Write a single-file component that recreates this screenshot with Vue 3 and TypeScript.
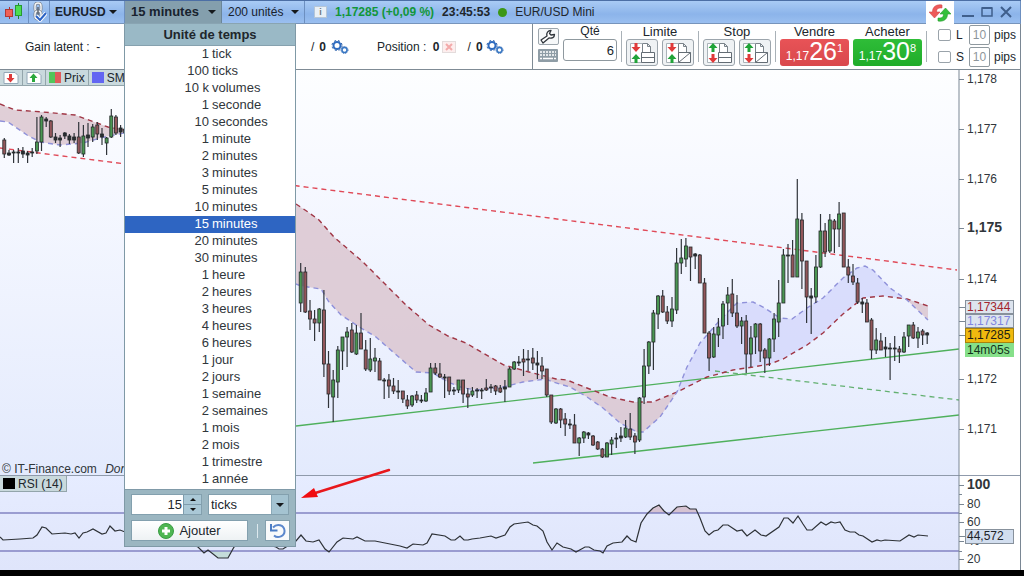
<script setup lang="ts">
import { ref } from 'vue'

interface Candle { x: number; high: number; top: number; bottom: number; low: number; fill: string }

const fills: Record<string, string> = { g: '#4a9652', r: '#92565a', k: '#2a2e33' }

// Each entry: high, body top, body bottom, low, colour key
function readCandles(source: string, start: number, step: number): Candle[] {
  return source.trim().split(/\s+/).map((item, i) => {
    const p = item.split(',')
    return { x: Math.round((start + i * step) * 10) / 10, high: +p[0], top: +p[1], bottom: +p[2], low: +p[3], fill: fills[p[4] ?? 'k'] }
  })
}

const morning = readCandles(`
138,140,154,158,r 150,153,155,156 150,152,153,163 148,152,153,163 147,151,154,158 151,153,155,163 148,152,153,157
117,142,151,154,g 115,117,142,151,g 117,119,121,127 120,121,137,138,r 133,137,140,143 135,138,140,147 132,133,136,139
134,136,140,144 133,137,140,143 122,137,153,154,r 125,136,154,157,g 123,135,138,147 124,127,137,142,g 122,125,134,140,r
128,134,137,145 137,138,143,155,g 109,116,137,138,g 115,117,133,135,r 125,128,132,137 123,129,133,137`, 4.3, 4.65)

const session = readCandles(`
263,272,303,312,g 267,272,312,313,r 300,311,319,330,r 310,319,323,341,r 308,309,323,332,g 290,310,364,377,r 351,364,394,408,r
370,380,397,422,g 346,350,382,398,g 337,337,351,370,g 327,332,337,367,g 323,330,352,353,r 325,333,354,355,g 313,333,349,349,r
340,350,369,371,r 338,359,370,372,g 348,358,361,372,g 358,361,380,380,r 378,380,381,399 374,380,386,398,r 378,386,391,394,r
380,391,392,399 391,391,399,403,r 395,400,406,409,r 395,396,405,407,g 391,395,400,403,r 395,400,401,403 388,393,401,402,g
363,368,392,392,g 363,368,373,375,r 363,374,377,378,r 374,377,378,398 377,377,391,395,r 387,390,391,395 380,380,390,393,g
380,380,394,403,r 388,394,397,408,r 387,391,395,397,g 388,390,391,398 388,390,391,399 379,388,390,391,r 384,387,388,393
385,386,391,395,r 385,388,392,393,r 380,387,389,402 367,369,387,387,g 361,362,369,370,g 356,362,363,366 349,359,362,376,r
350,359,360,371 348,358,363,370,r 351,363,365,379 357,366,371,379,r 369,369,395,397,r 395,395,422,424,r 408,409,423,424,g
408,409,420,428,r 413,419,424,436,r 419,424,425,429 414,425,443,443,r 437,438,443,456,g 431,432,438,443,g 432,433,435,439
435,436,445,446,r 441,442,449,450,r 448,449,457,458,r 442,443,457,457,g 437,440,444,455,g 433,438,439,448 427,436,438,442
420,428,437,438,g 413,429,437,440,r 433,436,442,454,r 397,398,440,442,g 349,366,397,404,g 341,342,366,374,g 310,313,342,370,g
295,296,314,329,g 290,296,312,313,r 306,312,321,324,r 297,309,321,327,g 248,263,310,314,g 239,258,263,274,g 238,246,259,267,g
247,247,257,281,r 253,254,256,269 254,255,283,283,r 278,283,333,333,r 331,333,358,371,r 327,334,357,358,g 318,327,335,347,g
301,304,326,339,g 287,295,303,325,g 279,294,313,317,r 295,313,326,328,r 317,321,326,344,g 315,321,354,373,r 326,338,354,367,g
323,324,337,354,g 323,324,351,362,r 348,350,358,373,r 338,339,358,366,g 313,319,339,352,g 280,303,322,337,g 249,255,303,303,g
244,255,256,283 240,255,277,277,r 179,219,277,277,g 213,220,261,289,r 261,261,297,323,r 288,296,298,334 255,267,297,303,g
214,231,267,268,g 223,231,252,257,r 214,220,251,253,g 219,221,229,253,r 202,214,229,247,g 213,213,267,267,r 259,267,275,283,r
264,276,282,285,r 278,283,302,304,r 298,302,304,313 299,303,322,322,r 318,320,350,359,r 328,340,350,354,g 333,341,350,350,r
337,347,349,357 343,348,349,380 336,348,349,361 346,349,352,363,r 332,337,352,353,g 325,325,336,347,g 322,325,338,339,r
327,332,338,348,g 329,331,335,345,r 332,333,335,344`, 300.7, 4.641)

const candles: Candle[] = [...morning, ...session]

const slow = '296,204 308,212 319,220 334,237 363,262 384,283 406,305 429,325 448,336 466,343 483,353 504,365 529,372 556,379 567,380 587,388 610,397 633,402 653,402 677,392 707,377 733,370 753,367 770,364 783,359 807,345 823,333 843,314 863,298 883,296 907,299 928,306'
const fast = '296,284 301,286 321,289 329,302 341,315 361,328 376,337 393,352 416,372 433,373 448,382 463,388 478,390 503,387 523,382 546,379 553,382 570,387 587,397 603,408 620,423 637,432 643,432 660,417 677,392 687,367 700,343 720,320 737,303 753,302 763,307 780,318 792,319 807,308 823,298 843,278 857,268 865,266 873,270 890,288 907,300 928,320'
const slowLeft = '0,104 15,110 43,112 75,115 97,123 108,127 124,130'
const fastLeft = '0,121 8,122 27,135 40,142 60,145 83,143 100,138 124,133'

function reversed(points: string): string {
  return points.split(' ').reverse().join(' ')
}
function between(points: string, from: number, to: number): string {
  return points.split(' ').filter((p) => { const x = +p.split(',')[0]; return x >= from && x <= to }).join(' ')
}
function band(from: number, to: number): string {
  return between(slow, from, to) + ' ' + reversed(between(fast, from, to))
}
const leftBand = slowLeft + ' ' + reversed(fastLeft)

const rsi = '0,537 3,540 20,539 33,538 37,535 42,527 46,528 52,534 65,533 71,534 75,533 79,538 83,533 87,532 93,529 102,534 106,533 110,526 115,531 120,530 125,532 150,534 180,540 198,547 204,553 208,550 218,558 228,558 234,547 250,540 276,547 279,549 283,549 286,547 296,541 301,535 306,541 313,542 319,540 325,549 329,552 337,542 343,538 353,539 357,537 365,541 375,541 390,544 400,546 407,548 413,544 423,545 427,543 432,534 445,536 451,540 455,540 460,536 464,540 468,540 472,539 480,538 491,536 496,538 505,535 510,527 514,524 521,523 528,522 533,525 537,526 543,531 547,542 552,550 557,543 563,547 571,549 576,552 585,547 589,547 594,550 600,551 603,553 607,546 613,543 622,542 627,536 631,540 636,542 641,523 647,514 653,508 659,505 664,511 669,515 677,507 686,506 690,509 696,509 700,518 705,531 709,535 714,531 718,530 723,525 728,525 737,531 742,530 747,536 755,530 761,535 766,536 779,527 784,518 788,518 793,523 798,516 803,524 807,530 812,530 821,522 826,525 831,522 835,523 840,522 845,530 850,532 855,532 859,535 863,536 872,542 877,540 881,541 885,540 900,541 909,535 914,537 918,535 928,536'

const prices = [
  { text: '1,178', y: 79 }, { text: '1,177', y: 129 }, { text: '1,176', y: 179 }, { text: '1,175', y: 228, strong: true },
  { text: '1,174', y: 279 }, { text: '1,172', y: 379 }, { text: '1,171', y: 429 },
]
const levels = [
  { text: '100', y: 485, strong: true }, { text: '80', y: 504 }, { text: '60', y: 522 }, { text: '40', y: 541 }, { text: '20', y: 559 },
]
const tags = [
  { text: '1,17344', y: 300, height: 14, fill: '#dde4ee', ink: '#a3242c', edge: '#87919c' },
  { text: '1,17317', y: 314, height: 14, fill: '#dde4ee', ink: '#8085e0', edge: '#87919c' },
  { text: '1,17285', y: 328, height: 15, fill: '#f0b90e', ink: '#1c1c14', edge: '#a8820c' },
  { text: '14m05s', y: 343, height: 14, fill: '#86e08a', ink: '#12301a', edge: '#86e08a' },
  { text: '44,572', y: 529, height: 15, fill: '#d2deef', ink: '#1c2228', edge: '#87919c' },
]

const units: [string, string][] = [
  ['1', 'tick'], ['100', 'ticks'], ['10 k', 'volumes'], ['1', 'seconde'], ['10', 'secondes'], ['1', 'minute'], ['2', 'minutes'],
  ['3', 'minutes'], ['5', 'minutes'], ['10', 'minutes'], ['15', 'minutes'], ['20', 'minutes'], ['30', 'minutes'], ['1', 'heure'],
  ['2', 'heures'], ['3', 'heures'], ['4', 'heures'], ['6', 'heures'], ['1', 'jour'], ['2', 'jours'], ['1', 'semaine'],
  ['2', 'semaines'], ['1', 'mois'], ['2', 'mois'], ['1', 'trimestre'], ['1', 'année'],
]
const selected = ref(10)
const amount = ref(15)
const customUnit = ref('ticks')
const quantity = ref('6')
const limitPips = ref('10')
const stopPips = ref('10')

const orderGroups = [
  { label: 'Limite', upFirst: false },
  { label: 'Stop', upFirst: true },
]
</script>

<template>
  <div class="window">
    <header class="titlebar">
      <button class="seg seg-candles" aria-label="Graphique">
        <svg width="20" height="18" viewBox="0 0 20 18">
          <path d="M5.500 4v12" stroke="#b03030" />
          <rect x="1.500" y="6.500" width="7" height="7" fill="#f06058" stroke="#b03838" />
          <path d="M14.500 0v16" stroke="#1f8a28" />
          <rect x="11.500" y="2.500" width="6" height="10" fill="#4cdc50" stroke="#259a30" />
        </svg>
      </button>
      <button class="seg seg-link" aria-label="Lier">
        <svg width="16" height="20" viewBox="0 0 16 20">
          <rect x="4" y="1" width="6" height="9" rx="3" fill="none" stroke="#7a828c" stroke-width="3" />
          <rect x="4" y="1" width="6" height="9" rx="3" fill="none" stroke="#f4f6f8" stroke-width="1.500" />
          <rect x="4" y="9" width="6" height="8" rx="3" fill="none" stroke="#7a828c" stroke-width="3" />
          <rect x="4" y="9" width="6" height="8" rx="3" fill="none" stroke="#f4f6f8" stroke-width="1.500" />
          <path d="M7 5v8" stroke="#5d6570" stroke-width="1.500" />
          <path d="M5 14l4 4 6-7" fill="none" stroke="#fff" stroke-width="4" />
          <path d="M5 14l4 4 6-7" fill="none" stroke="#2b62c4" stroke-width="2" />
        </svg>
      </button>
      <button class="seg seg-symbol">EURUSD<span class="caret"></span></button>
      <div class="seg-menu">
        <button class="seg seg-time">15 minutes<span class="caret"></span></button>
        <section class="menu" aria-label="Unité de temps">
          <h2>Unité de temps</h2>
          <ul>
            <li v-for="(u, i) in units" :key="i">
              <button class="unit" :class="{ active: i === selected }" @click="selected = i">
                <span class="count">{{ u[0] }}</span><span>{{ u[1] }}</span>
              </button>
            </li>
          </ul>
          <div class="custom">
            <div class="row">
              <div class="stepper">
                <input v-model="amount" aria-label="Nombre" />
                <div class="steps">
                  <button aria-label="Augmenter" @click="amount++"><i class="up"></i></button>
                  <button aria-label="Diminuer" @click="amount--"><i class="down"></i></button>
                </div>
              </div>
              <div class="combo">
                <select v-model="customUnit" aria-label="Unité">
                  <option>ticks</option><option>secondes</option><option>minutes</option><option>heures</option>
                </select>
                <span class="combo-arrow"><i class="caret"></i></span>
              </div>
            </div>
            <div class="row">
              <button class="add">
                <svg width="16" height="16" viewBox="0 0 16 16">
                  <circle cx="8" cy="8" r="7.500" fill="#4fb653" stroke="#3a9c44" />
                  <path d="M8 4v8M4 8h8" stroke="#fff" stroke-width="3" />
                </svg>
                Ajouter
              </button>
              <span class="bar"></span>
              <button class="reset" aria-label="Réinitialiser">
                <svg width="18" height="16" viewBox="0 0 18 16">
                  <path d="M4 4.500C8 0 15 2 15.500 7.500 16 13 9 16 5 12.500" fill="none" stroke="#5b87cc" stroke-width="2" />
                  <path d="M2 1v6.500h6.500" fill="none" stroke="#4a7cc4" stroke-width="2" />
                </svg>
              </button>
            </div>
          </div>
        </section>
      </div>
      <button class="seg seg-count">200 unités<span class="caret"></span></button>
      <div class="quote">
        <button class="info" aria-label="Informations">i</button>
        <strong class="rise">1,17285 (+0,09 %)</strong>
        <strong>23:45:53</strong>
        <span class="dot"></span>
        <span>EUR/USD Mini</span>
      </div>
      <button class="refresh" aria-label="Actualiser">
        <svg width="22" height="18" viewBox="0 0 22 18">
          <path d="M13 1C7 0 3.500 3 3.500 8H0l5.500 6L11 8H7.500C7.500 5 9 3.500 13 4z" fill="#ee5a5a" stroke="#d04848" stroke-width=".6" />
          <path d="M9 17c6 1 9.500-2 9.500-7H22l-5.500-6L11 10h3.500c0 3-1.500 4.500-5.500 4z" fill="#35c03c" stroke="#289a30" stroke-width=".6" />
        </svg>
      </button>
      <div class="window-buttons">
        <button aria-label="Réduire"><svg width="14" height="12" viewBox="0 0 14 12"><path d="M1 10h12" stroke="#3f5f8c" stroke-width="2" /></svg></button>
        <button aria-label="Agrandir"><svg width="14" height="12" viewBox="0 0 14 12"><path d="M2 2h10v8H2z" fill="none" stroke="#3f5f8c" stroke-width="1.500" /><path d="M2 2h10" stroke="#3f5f8c" stroke-width="2" /></svg></button>
        <button aria-label="Fermer"><svg width="14" height="12" viewBox="0 0 14 12"><path d="M2 1l10 10M12 1L2 11" stroke="#3f5f8c" stroke-width="2" /></svg></button>
      </div>
    </header>

    <div class="tradebar">
      <div class="summary">
        <span class="gain">Gain latent :&nbsp; -</span>
        <span class="orders">/ <b>0</b>
          <svg width="18" height="14" viewBox="0 0 18 14">
            <circle cx="6" cy="5.500" r="3.500" fill="#fff" stroke="#2f6cc0" stroke-width="2" /><circle cx="6" cy="5.500" r="5" fill="none" stroke="#1f58a8" stroke-dasharray="2 2" />
            <circle cx="13.500" cy="10" r="2.500" fill="#fff" stroke="#3878c4" stroke-width="1.500" /><circle cx="13.500" cy="10" r="3.500" fill="none" stroke="#2861b0" stroke-dasharray="1 1" />
          </svg>
        </span>
        <span class="position">Position :&nbsp; <b>0</b>
          <svg class="close-pos" width="14" height="12" viewBox="0 0 14 12"><rect x=".5" y=".5" width="13" height="11" fill="#fdeeee" stroke="#e4dcdc" /><path d="M4 3l6 6M10 3L4 9" stroke="#f3aaaa" stroke-width="2" /></svg>
          <span class="slash">/ <b>0</b></span>
          <svg width="18" height="14" viewBox="0 0 18 14">
            <circle cx="6" cy="5.500" r="3.500" fill="#fff" stroke="#2f6cc0" stroke-width="2" /><circle cx="6" cy="5.500" r="5" fill="none" stroke="#1f58a8" stroke-dasharray="2 2" />
            <circle cx="13.500" cy="10" r="2.500" fill="#fff" stroke="#3878c4" stroke-width="1.500" /><circle cx="13.500" cy="10" r="3.500" fill="none" stroke="#2861b0" stroke-dasharray="1 1" />
          </svg>
        </span>
      </div>
      <div class="order-panel">
        <div class="tools">
          <button class="tool wrench" aria-label="Réglages">
            <svg width="18" height="15" viewBox="0 0 18 15"><path d="M2 11l6-4c-1-3 1-5.500 4-5.500l-1.500 3 1.500 1.500 3.500-.5c0 3-2.500 4-5.500 3.500L4 14z" fill="#fff" stroke="#30363c" stroke-width="1.300" stroke-linejoin="round" /></svg>
          </button>
          <button class="tool keys" aria-label="Clavier">
            <svg width="20" height="13" viewBox="0 0 20 13"><rect width="20" height="13" rx="1" fill="#8f9da6" /><path d="M2 3h16M2 6h16" stroke="#fff" stroke-width="1.500" stroke-dasharray="2 1" /><path d="M2 9.500h2M5 9.500h10M16 9.500h2" stroke="#fff" stroke-width="1.500" /></svg>
          </button>
        </div>
        <div class="qty">
          <label for="qty">Qté</label>
          <input id="qty" v-model="quantity" />
        </div>
        <span class="rule"></span>
        <template v-for="g in orderGroups" :key="g.label">
          <div class="group">
            <span class="title">{{ g.label }}</span>
            <div class="pair">
              <button v-for="n in 2" :key="n" class="order" :aria-label="g.label + ' ' + n">
                <svg width="28" height="24" viewBox="0 0 28 24">
                  <path d="M14 2.500H2.500v19H14" fill="#fff" stroke="#aab3b9" />
                  <g v-if="g.upFirst">
                    <path d="M8 2l4.500 5h-3v4h-3V7h-3z" fill="#20a338" />
                    <path d="M8 22l4.500-5h-3v-4h-3v4h-3z" fill="#e03a3a" />
                  </g>
                  <g v-else>
                    <path d="M8 11l4.500-5h-3V2h-3v4h-3z" fill="#e03a3a" />
                    <path d="M8 13l4.500 5h-3v4h-3v-4h-3z" fill="#20a338" />
                  </g>
                  <path d="M14.500 12V2.500h5l3 3V12M19.500 2.500v3h3" fill="#fff" stroke="#7a838a" />
                  <g fill="#fff" stroke="#636c74">
                    <path v-if="n === 1" d="M13.500 11.500h13v10h-13zM13.500 16.500h13" />
                    <path v-else d="M14.500 11.500h12v10h-12zM14.500 21.500l12-10" />
                  </g>
                </svg>
              </button>
            </div>
          </div>
          <span class="rule"></span>
        </template>
        <div class="deal">
          <span class="title">Vendre</span>
          <button class="price sell"><span class="small">1,17</span><span class="big">26</span><sup>1</sup></button>
        </div>
        <div class="deal">
          <span class="title">Acheter</span>
          <button class="price buy"><span class="small">1,17</span><span class="big">30</span><sup>8</sup></button>
        </div>
        <span class="rule"></span>
        <div class="guards">
          <div class="guard"><input id="guard-l" type="checkbox" /><label for="guard-l">L</label><input id="pips-l" v-model="limitPips" class="pips" /><label for="pips-l">pips</label></div>
          <div class="guard"><input id="guard-s" type="checkbox" /><label for="guard-s">S</label><input id="pips-s" v-model="stopPips" class="pips" /><label for="pips-s">pips</label></div>
        </div>
      </div>
    </div>

    <main class="chart">
      <svg class="plot" viewBox="0 70 1024 500" role="img" aria-label="EUR/USD Mini, 15 minutes">
        <defs>
          <linearGradient id="sky" x1="0" y1="0" x2="0" y2="1">
            <stop offset="0" stop-color="#fdfeff" /><stop offset=".25" stop-color="#f7f9ff" /><stop offset="1" stop-color="#e3eafd" />
          </linearGradient>
          <linearGradient id="sky2" x1="0" y1="0" x2="0" y2="1">
            <stop offset="0" stop-color="#e6ecff" /><stop offset="1" stop-color="#dfe5fb" />
          </linearGradient>
          <clipPath id="overbought"><rect x="600" y="500" width="359" height="13" /></clipPath>
          <clipPath id="oversold"><rect x="0" y="551" width="959" height="18" /></clipPath>
        </defs>
        <rect x="0" y="70" width="1024" height="500" fill="#fff" />
        <rect x="0" y="70" width="959" height="405" fill="url(#sky)" />
        <rect x="0" y="475" width="959" height="95" fill="url(#sky2)" />

        <g fill="#d9c3cd" fill-opacity=".8">
          <polygon :points="leftBand" />
          <polygon :points="band(296, 677)" />
          <polygon :points="band(907, 930)" />
        </g>
        <polygon :points="band(677, 907)" fill="#d5d8fb" fill-opacity=".85" />

        <g fill="none" stroke="#4fb05c" stroke-width="1.300">
          <path d="M296 426L959 349M533 463L959 415" />
          <path d="M715 371L959 400" stroke="#63b070" stroke-dasharray="5 4" />
        </g>
        <g fill="none" stroke-dasharray="5 4" stroke-width="1.400">
          <polyline :points="slow" stroke="#a03645" />
          <polyline :points="slowLeft" stroke="#a03645" />
          <polyline :points="fast" stroke="#8f91da" />
          <polyline :points="fastLeft" stroke="#8f91da" />
          <path d="M0 148L957 270" stroke="#e04a58" />
        </g>

        <g v-for="(c, i) in candles" :key="i">
          <path :d="`M${c.x} ${c.high}V${c.low}`" stroke="#30343a" stroke-width="1.200" />
          <rect :x="c.x - 1.5" :y="c.top" width="3" :height="Math.max(1, c.bottom - c.top)" :fill="c.fill" stroke="#23282a" stroke-width=".8" />
        </g>

        <path d="M0 475.500H1020" stroke="#8f9aab" />
        <polygon :points="'600,513 ' + between(rsi, 641, 700) + ' 700,513'" fill="#d6c3d2" clip-path="url(#overbought)" />
        <polygon :points="between(rsi, 198, 240) + ' 240,551 198,551'" fill="#c4dcda" clip-path="url(#oversold)" />
        <path d="M0 513H959M0 551H959" stroke="#8384c2" stroke-width="1.600" />
        <polyline :points="rsi" fill="none" stroke="#2d3136" stroke-width="1.200" />

        <g stroke="#7a8794">
          <path d="M959 70V570" />
          <path d="M1020.500 70V570" />
          <path v-for="p in prices" :key="p.text" :d="`M959 ${p.y}.5h5`" />
          <path v-for="p in levels" :key="p.text" :d="`M959 ${p.y}.5h5`" />
          <path d="M959 307.500h7M959 321.500h7M959 335.500h7M959 494.500h3M959 513.500h3M959 551.500h3M959 536.500h7" />
        </g>
        <g class="axis">
          <text v-for="p in prices" :key="p.text" x="967" :y="p.y + 4" :class="{ strong: p.strong }">{{ p.text }}</text>
          <text v-for="p in levels" :key="p.text" x="967" :y="p.y + 4" :class="{ strong: p.strong }">{{ p.text }}</text>
          <g v-for="t in tags" :key="t.text">
            <rect x="965.500" :y="t.y + 0.5" width="48" :height="t.height - 1" :fill="t.fill" :stroke="t.edge" />
            <text x="967" :y="t.y + 11" :fill="t.ink">{{ t.text }}</text>
          </g>
          <text x="2" y="473">© IT-Finance.com <tspan font-style="italic" dx="5">Données</tspan></text>
        </g>
        <path d="M389 470L312 494" stroke="#e8181c" stroke-width="2.500" stroke-linecap="round" />
        <path d="M301 498L314 488L318 497Z" fill="#f00c10" />
      </svg>
      <div class="legend">
        <button class="chip" aria-label="Vente">
          <svg width="16" height="12" viewBox="0 0 16 12"><path d="M1 .5h11l3 3v8H1z" fill="#fff" stroke="#94a8b8" /><path d="M7.500 10.500l4-4.500h-2.500V2H6v4H3.500z" fill="#dc3a3a" /></svg>
        </button>
        <button class="chip" aria-label="Achat">
          <svg width="16" height="12" viewBox="0 0 16 12"><path d="M1 .5h11l3 3v8H1z" fill="#fff" stroke="#94a8b8" /><path d="M7.500 1.500l4 4.500h-2.500v4H6V6H3.500z" fill="#2aa83c" /></svg>
        </button>
        <button class="chip"><i class="swatch prix"></i>Prix</button>
        <button class="chip"><i class="swatch sma"></i>SMA</button>
      </div>
      <button class="chip rsi-chip"><i class="swatch black"></i>RSI (14)</button>
    </main>
  </div>
</template>

<style>
body { background: #000; }
</style>

<style scoped>
.window { font: 12px/16px "Liberation Sans", Arial, sans-serif; color: #20262c; background: #000; min-height: 100vh; }
.window * { box-sizing: border-box; }
button, input, select { font: inherit; color: inherit; margin: 0; padding: 0; border: 0; background: none; border-radius: 0; }
svg { display: block; flex: none; }

.titlebar { display: flex; height: 24px; margin-right: 3px; background: linear-gradient(#a9cbf5, #8cb4ea 60%, #9abff0); border-top: 1px solid #4c6fa5; border-bottom: 1px solid #7794bb; position: relative; z-index: 2; box-shadow: 3px 0 #fff; }
.seg { display: flex; align-items: center; justify-content: space-between; height: 22px; border-right: 1px solid #6c8fc0; color: #18222e; flex: none; }
.seg-candles { width: 29px; justify-content: center; }
.seg-link { width: 21px; justify-content: center; }
.seg-symbol { width: 75px; padding: 0 7px 0 5px; font-weight: bold; }
.seg-menu { position: relative; flex: none; }
.seg-time { width: 97px; padding: 0 5px 0 6px; font-weight: bold; font-size: 13px; background: #849fad; border-right-color: #6b8699; }
.seg-count { width: 83px; padding: 0 5px 0 6px; }
.caret { width: 0; height: 0; border: 4px solid transparent; border-top-color: #15191d; border-bottom-width: 0; }
.quote { display: flex; align-items: center; flex: 1; min-width: 0; gap: 8px; padding-left: 9px; white-space: nowrap; }
.info { width: 13px; height: 12px; background: #e9f0f6; border: 1px solid #b5c6d8; font-size: 9px; line-height: 9px; font-weight: bold; color: #6c7780; }
.rise { color: #12963a; }
.dot { width: 9px; height: 9px; border-radius: 50%; background: #3c9716; }
.refresh { width: 28px; display: grid; place-items: center; background: #fff; height: 24px; flex: none; }
.window-buttons { display: flex; align-items: center; gap: 5px; padding: 0 7px; flex: none; border-right: 1px solid #6c8fc0; }

.menu { position: absolute; left: -1px; top: 22px; width: 172px; background: #fff; border: 1px solid #7f99a6; border-top-color: #89a4b2; z-index: 5; }
.menu h2 { margin: 0; font-size: 13px; line-height: 21px; text-align: center; background: #9ab9c6; border-bottom: 1px solid #86a1ae; }
.menu ul { margin: 0; padding: 0 0 1px; list-style: none; }
.menu li { height: 17px; }
.unit { display: grid; grid-template-columns: 84px 1fr; gap: 3px; width: 100%; height: 17px; font-size: 13px; line-height: 16px; text-align: left; color: #30363b; }
.count { text-align: right; }
.unit.active { background: #2e65c2; color: #fff; }
.custom { background: #9bb6c1; border-top: 1px solid #809aa8; padding: 4px 6px 5px; display: grid; gap: 5px; }
.row { display: flex; align-items: center; gap: 6px; }
.stepper { display: flex; width: 71px; height: 21px; border: 1px solid #83a0ae; background: #fff; }
.stepper input { flex: 1; min-width: 0; width: 0; text-align: right; font-size: 13px; padding-right: 1px; }
.steps { width: 18px; display: grid; background: #aac8d6; }
.steps button { display: grid; place-items: center; border-left: 1px solid #7f9cac; }
.steps button + button { border-top: 1px solid #7f9cac; }
.up { border: 3px solid transparent; border-bottom-color: #111; border-top-width: 0; }
.down { border: 3px solid transparent; border-top-color: #111; border-bottom-width: 0; }
.combo { display: grid; grid-template-columns: 1fr 17px; width: 81px; height: 21px; background: #fff; border: 1px solid #83a0ae; }
.combo select { grid-area: 1 / 1 / 2 / 3; appearance: none; padding-left: 2px; font-size: 13px; }
.combo-arrow { grid-area: 1 / 2; display: grid; place-items: center; background: #a4c3d1; border-left: 1px solid #8aa9b8; pointer-events: none; }
.add { width: 117px; height: 21px; display: flex; align-items: center; justify-content: center; gap: 5px; background: linear-gradient(#fff, #eef2f4); border: 1px solid #83a0ae; font-size: 13px; }
.bar { width: 1px; height: 14px; background: #dde9ee; margin: 0 1px 0 3px; }
.reset { width: 25px; height: 21px; display: grid; place-items: center; background: #f8fafb; border: 1px solid #83a0ae; }

.tradebar { display: flex; height: 46px; margin-right: 3px; background: #fff; border-bottom: 1px solid #7f8b95; border-right: 1px solid #7a8794; box-shadow: 3px 0 #fff; }
.summary { flex: 1; display: flex; align-items: center; min-width: 0; white-space: nowrap; padding-left: 25px; }
.gain { width: 286px; flex: none; }
.orders { display: flex; align-items: center; gap: 5px; width: 66px; flex: none; }
.position { display: flex; align-items: center; gap: 3px; }
.slash { margin-left: 8px; }
.slash b { margin-left: 2px; }
.order-panel { display: flex; align-items: stretch; border-left: 1px solid #7f8b95; padding: 0 4px 0 5px; flex: none; }
.tools { display: flex; flex-direction: column; gap: 4px; padding: 4px 4px 0 0; }
.tool { width: 21px; display: grid; place-items: center; }
.wrench { height: 17px; border: 1px solid #9ca5ac; border-radius: 2px; background: #f6f8f9; }
.keys { height: 13px; }
.qty { display: flex; flex-direction: column; width: 54px; }
.qty label, .title { text-align: center; height: 15px; line-height: 15px; }
.title { font-size: 13px; }
.qty input { height: 22px; border: 1px solid #8f999f; border-radius: 3px; text-align: right; padding-right: 2px; width: 100%; font-size: 13px; }
.rule { width: 1px; background: #a9b1b7; margin: 7px 4px; }
.group, .deal { display: flex; flex-direction: column; }
.pair { display: flex; gap: 4px; }
.order { width: 32px; height: 27px; display: grid; place-items: center; border: 1px solid #9ca5ac; border-radius: 3px; background: #eff2f4; }
.deal + .deal { margin-left: 4px; }
.price { width: 69px; height: 27px; border-radius: 3px; display: flex; align-items: flex-end; justify-content: center; color: #fff; line-height: 1; padding-bottom: 4px; }
.sell { background: linear-gradient(#e85357, #d9484c); }
.buy { background: linear-gradient(#2fbd38, #1fac2a); }
.small { font-size: 12px; line-height: 12px; }
.big { font-size: 25px; line-height: 21px; }
.price sup { font-size: 11px; line-height: 11px; align-self: flex-start; margin-top: 4px; }
.guards { display: grid; gap: 1px; padding: 1px 0 2px 7px; align-content: center; }
.guard { display: grid; grid-template-columns: 14px 9px 21px auto; column-gap: 4px; align-items: center; height: 21px; }
.guard input[type="checkbox"] { appearance: none; width: 13px; height: 12px; border: 1px solid #9aa3aa; border-radius: 2px; background: #fff; }
.pips { width: 21px; height: 20px; border: 1px solid #8f999f; border-radius: 2px; text-align: center; color: #8d959b; }

.chart { position: relative; }
.plot { width: 100%; height: auto; }
.axis { font: 12px "Liberation Sans", Arial, sans-serif; fill: #30363b; }
.axis .strong { font-weight: bold; font-size: 14px; }
.legend { position: absolute; left: 0; top: 0; display: flex; }
.chip { height: 16px; display: flex; align-items: center; gap: 3px; padding: 0 3px; background: #c9d9dd; border-right: 1px solid #93a5ab; border-bottom: 1px solid #93a5ab; }
.swatch { width: 12px; height: 11px; }
.prix { background: linear-gradient(90deg, #52c65a 50%, #e05c5c 50%); }
.sma { background: #6366f2; }
.black { background: #000; }
.rsi-chip { position: absolute; left: 0; top: 81.2%; }
</style>
